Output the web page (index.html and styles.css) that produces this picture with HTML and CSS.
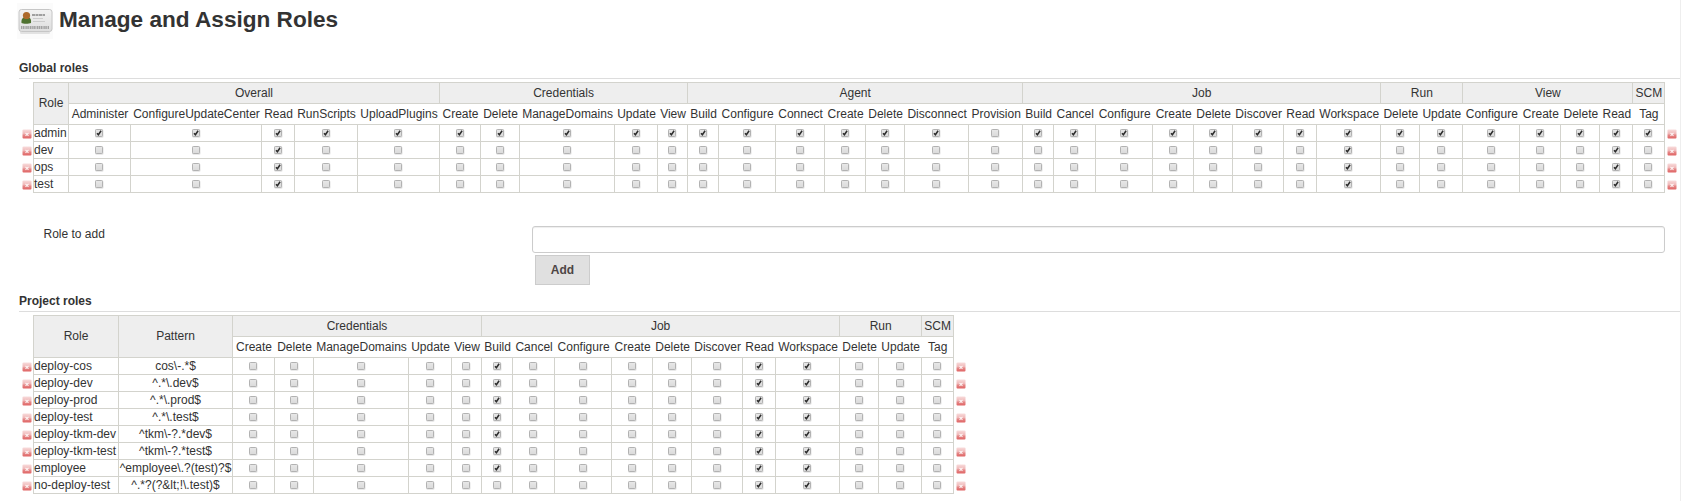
FILE: index.html
```html
<!DOCTYPE html>
<html lang="en">
<head>
<meta charset="utf-8">
<title>Manage and Assign Roles</title>
<link rel="stylesheet" href="styles.css">
</head>
<body>
<svg class="defs" aria-hidden="true">
  <defs>
    <linearGradient id="redFade" x1="0" y1="0" x2="0" y2="1"><stop offset="0" stop-color="#f8dcdc"/><stop offset=".5" stop-color="#efb5b5"/><stop offset=".6" stop-color="#e58a8a"/><stop offset="1" stop-color="#e06464"/></linearGradient>
    <linearGradient id="boxFade" x1="0" y1="0" x2="0" y2="1"><stop offset="0" stop-color="#e8e8e8"/><stop offset="1" stop-color="#dadada"/></linearGradient>
    <linearGradient id="cardFade" x1="0" y1="0" x2="0" y2="1"><stop offset="0" stop-color="#f2f2f2"/><stop offset="1" stop-color="#dedede"/></linearGradient>
    <symbol id="remove" viewBox="0 0 10 10"><rect x=".5" y=".5" width="9" height="9" rx="1" fill="url(#redFade)"/><path d="M3.500 3.900l3 3M6.500 3.900l-3 3" stroke="#fff" stroke-opacity=".85" stroke-width="1.200"/></symbol>
    <symbol id="off" viewBox="0 0 9 9"><rect x=".3" y=".8" width="8.200" height="8" rx="1.200" fill="#e4e4e4"/><rect x=".5" y=".5" width="7" height="7" rx=".8" fill="url(#boxFade)" stroke="#b2b2b2"/></symbol>
    <symbol id="on" viewBox="0 0 9 9"><use href="#off"/><path d="M2 4.200l1.400 1.500 2.700-3.900" fill="none" stroke="#2c2c2c" stroke-width="1.500"/></symbol>
  </defs>
</svg>
<main class="page">
  <header class="title">
    <svg class="card" viewBox="0 0 36 36">
      <rect width="36" height="36" fill="#fbfbfb"/>
      <rect x="3" y="28" width="30" height="3" rx="1.5" fill="#e2e2e2"/>
      <rect x="2" y="6.500" width="33" height="22" rx="2.500" fill="url(#cardFade)" stroke="#c6c6c6"/>
      <path d="M4.500 20c-.5-5 2-6 5-6s5 1 4.500 6c-2 1-8 1-9.500 0z" fill="#4f7230"/>
      <circle cx="9.500" cy="12.500" r="3.600" fill="#ad6a2c"/>
      <path d="M15 12h13" stroke="#858585" stroke-width="1.600" stroke-dasharray="3 .5"/>
      <path d="M16 15.500h10M16 18.500h12" stroke="#ccc"/>
      <path d="M4 24.500h28" stroke="#a2a2a2" stroke-width="3" stroke-dasharray="1 .6 1.500 .5"/>
    </svg>
    <h1>Manage and Assign Roles</h1>
  </header>
  <h2 class="section-title">Global roles</h2>
  <table class="matrix" id="global"></table>
  <div class="add-form">
    <label for="role">Role to add</label>
    <div class="controls">
      <input id="role" class="role-input" type="text">
      <button class="add-button" type="button">Add</button>
    </div>
  </div>
  <h2 class="section-title">Project roles</h2>
  <table class="matrix" id="project"></table>
</main>
<script src="tables.js"></script>
</body>
</html>
```
FILE: styles.css
```css
body {
  margin: 0;
  background: #fff;
  color: #333;
  font: 12px/16px "Liberation Sans", Arial, sans-serif;
}
.defs { position: absolute; width: 0; height: 0; }
.page {
  box-sizing: border-box;
  height: 501px;
  padding-left: 19px;
  border-right: 1px solid #eee;
  overflow: hidden;
}
.title { display: flex; height: 59px; padding-top: 3px; margin-left: -2px; box-sizing: border-box; }
.card { width: 36px; height: 36px; margin-right: 6px; }
h1 { margin: 2px 0 0; font-size: 22.6px; line-height: 29px; }
.section-title {
  box-sizing: border-box;
  height: 20px;
  margin: 0 0 3px;
  border-bottom: 1px solid #ddd;
  font-size: 12px;
  line-height: 18px;
}
.matrix { table-layout: fixed; border-collapse: separate; border-spacing: 0; }
.matrix td, .matrix th {
  box-sizing: border-box;
  height: 17px;
  padding: 0;
  border: 0 solid #d3d3cd;
  border-width: 0 1px 1px 0;
  font-weight: normal;
  line-height: 16px;
  text-align: center;
  white-space: nowrap;
}
.matrix td { vertical-align: top; }
.matrix .groups th { height: 22px; border-top-width: 1px; background: #eee; }
.matrix .groups th[rowspan] { padding-bottom: 1px; }
.matrix .names th { height: 21px; border-right-width: 0; }
.matrix .names th:last-of-type { border-right-width: 1px; }
.matrix .groups .gutter, .matrix .gutter { border-top-width: 0; border-bottom-width: 0; background: none; }
.matrix .end { border-right-width: 0; text-align: left; }
.matrix .role { text-align: left; }
.matrix svg { display: block; width: 9px; height: 9px; margin: 4px auto 0; }
.matrix .gutter svg { width: 10px; height: 10px; margin: 4px 0 0 3px; }
.matrix .end svg { margin-left: 2px; }
.add-form { display: flex; height: 59px; margin: 33px 0 7px; padding-left: 24.5px; }
.add-form label { width: 488.5px; }
.controls { display: flex; flex-direction: column; align-items: flex-start; gap: 2px; }
.role-input {
  box-sizing: border-box;
  width: 1133px;
  height: 27px;
  border: 1px solid #ccc;
  border-radius: 3px;
  background: #fff;
  box-shadow: inset 0 1px 1px #eee;
}
.add-button {
  box-sizing: border-box;
  width: 55px;
  height: 30px;
  margin-left: 3px;
  padding: 0;
  border: 1px solid #ccc;
  background: #e0e0e0;
  color: #4d4545;
  font: bold 12px "Liberation Sans", Arial, sans-serif;
}
```
FILE: tables.js
```js
const credentials = ['Credentials', ['Create', 'Delete', 'ManageDomains', 'Update', 'View']];
const job = ['Job', ['Build', 'Cancel', 'Configure', 'Create', 'Delete', 'Discover', 'Read', 'Workspace']];
const run = ['Run', ['Delete', 'Update']];
const scm = ['SCM', ['Tag']];
const all = [...Array(30).keys()];

const icon = (name) => `<svg><use href="#${name}"/></svg>`;

function build(id, edges, labels, groups, rows) {
  const widths = [15, ...edges.slice(1).map((e, i) => e - edges[i]), 15];
  const names = groups.flatMap((g) => g[1]);
  const table = document.getElementById(id);
  table.style.width = widths.reduce((a, b) => a + b) + 'px';
  table.innerHTML =
    `<colgroup>${widths.map((w) => `<col style="width:${w}px">`).join('')}</colgroup>` +
    `<tr class="groups"><td class="gutter" rowspan="2"></td>` +
    labels.map((l) => `<th rowspan="2">${l}</th>`).join('') +
    groups.map((g) => `<th colspan="${g[1].length}">${g[0]}</th>`).join('') +
    `<td class="gutter end" rowspan="2"></td></tr>` +
    `<tr class="names">${names.map((n) => `<th>${n}</th>`).join('')}</tr>` +
    rows.map(([cells, on]) =>
      `<tr><td class="gutter">${icon('remove')}</td>` +
      cells.map((c, i) => `<td${i ? '' : ' class="role"'}>${c.replace(/&/g, '&amp;')}</td>`).join('') +
      names.map((n, i) => `<td>${icon(on.includes(i) ? 'on' : 'off')}</td>`).join('') +
      `<td class="gutter end">${icon('remove')}</td></tr>`).join('');
}

build('global',
  [33, 68, 130, 261, 294, 357, 439, 480, 519, 614, 657, 687, 718, 775, 824, 865, 904, 968, 1022, 1053, 1095,
    1152, 1193, 1232, 1283, 1316, 1380, 1419, 1462, 1519, 1560, 1599, 1632, 1664],
  ['Role'],
  [['Overall', ['Administer', 'ConfigureUpdateCenter', 'Read', 'RunScripts', 'UploadPlugins']], credentials,
    ['Agent', ['Build', 'Configure', 'Connect', 'Create', 'Delete', 'Disconnect', 'Provision']],
    job, run, ['View', ['Configure', 'Create', 'Delete', 'Read']], scm],
  [[['admin'], [...all, 30, 31].filter((i) => i !== 16)],
    [['dev'], [2, 24, 30]], [['ops'], [2, 24, 30]], [['test'], [2, 24, 30]]]);

build('project',
  [33, 118, 232, 274, 313, 408, 451, 481, 512, 554, 611, 652, 691, 742, 775, 839, 878, 921, 953],
  ['Role', 'Pattern'],
  [credentials, job, run, scm],
  [[['deploy-cos', 'cos\\-.*$'], [5, 11, 12]],
    [['deploy-dev', '^.*\\.dev$'], [5, 11, 12]],
    [['deploy-prod', '^.*\\.prod$'], [5, 11, 12]],
    [['deploy-test', '^.*\\.test$'], [5, 11, 12]],
    [['deploy-tkm-dev', '^tkm\\-?.*dev$'], [5, 11, 12]],
    [['deploy-tkm-test', '^tkm\\-?.*test$'], [5, 11, 12]],
    [['employee', '^employee\\.?(test)?$'], [5, 11, 12]],
    [['no-deploy-test', '^.*?(?&lt;!\\.test)$'], [11, 12]]]);
```
